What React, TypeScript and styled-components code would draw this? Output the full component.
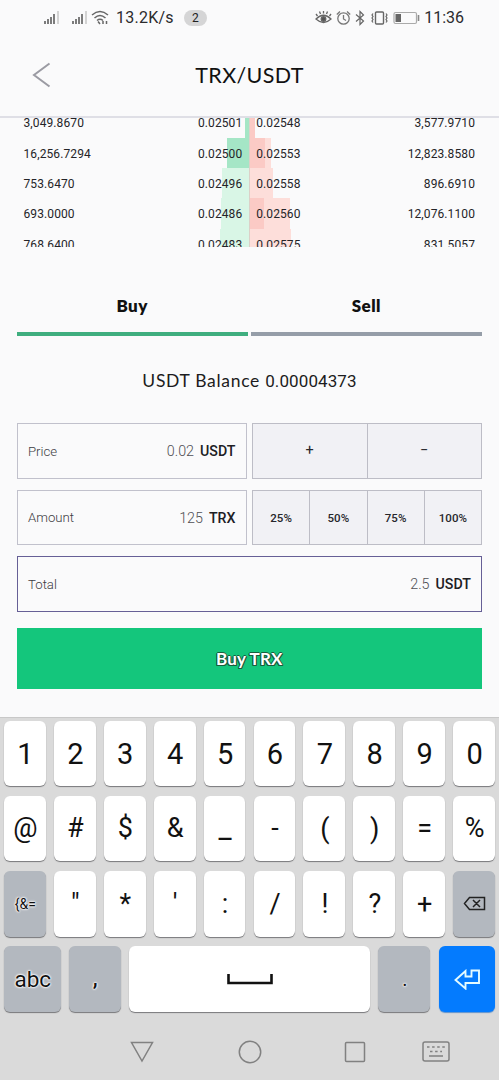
import React from 'react';
import styled, { createGlobalStyle } from 'styled-components';

const GlobalStyle = createGlobalStyle`
  * { box-sizing: border-box; }
  body { margin: 0; background: #fafafb; font-family: Roboto, "Liberation Sans", sans-serif; color: #151519; }
`;

const Screen = styled.main`
  width: 499px; height: 1080px; overflow: hidden;
  display: flex; flex-direction: column; background: #fafafb;
`;

const StatusBar = styled.header`
  height: 34px; padding: 0 35px 0 42px; flex: none;
  display: flex; justify-content: space-between; align-items: center;
`;
const StatusGroup = styled.div<{ $gap?: number }>`
  display: flex; align-items: center; height: 34px; gap: ${p => p.$gap ?? 0}px; padding-top: 1px;
`;
const StatusText = styled.span<{ $ml: number; $ls?: number }>`
  font-size: 16px; line-height: 34px; color: #2b2b2d; white-space: nowrap;
  margin-left: ${p => p.$ml}px; letter-spacing: ${p => p.$ls ?? 0}px;
`;
const CountPill = styled.span`
  width: 23px; height: 16px; border-radius: 8px; margin-left: 10px; background: #d5d5d6;
  font-size: 12px; line-height: 16px; text-align: center; color: #222;
`;

const TitleBar = styled.div`
  height: 84px; flex: none; display: grid; grid-template-columns: 60px 1fr 60px; align-items: center;
  border-bottom: 2px solid #dfdfe6;
`;
const BackButton = styled.button`
  border: 0; background: none; padding: 0 0 0 31px; display: flex;
`;
const Title = styled.h1`
  margin: 0; text-align: center; font: 400 21.5px/30px Lato, sans-serif; color: #111; letter-spacing: 0.35px;
`;

const OrderBook = styled.section`
  height: 129px; flex: none; overflow: hidden;
`;
const BookRow = styled.div`
  height: 30.4px; display: grid; grid-template-columns: 249px 250px; font-size: 12px; line-height: 32px;
  color: #242428; letter-spacing: 0.1px;
  &:first-child { margin-top: -10.7px; }
`;
const Side = styled.div<{ $sell?: boolean; $depth: number; $own: number }>`
  display: flex; justify-content: space-between; height: 30.4px;
  padding: ${p => (p.$sell ? '0 24px 0 6.2px' : '0 6.7px 0 23.5px')};
  background-repeat: no-repeat;
  background-position: ${p => (p.$sell ? 'left' : 'right')} top;
  background-image:
    ${p => (p.$sell ? 'linear-gradient(#fbcac5,#fbcac5)' : 'linear-gradient(#a5e6c6,#a5e6c6)')},
    ${p => (p.$sell ? 'linear-gradient(#fddeda,#fddeda)' : 'linear-gradient(#d9f6e6,#d9f6e6)')};
  background-size: ${p => p.$own}px 100%, ${p => p.$depth}px 100%;
  ${p => (p.$sell ? 'border-left: 1.4px solid #dcd0c8;' : '')}
`;

const Tabs = styled.nav`
  height: 53px; margin: 36px 17px 0 16.5px; flex: none; display: grid; grid-template-columns: 1fr 1fr; gap: 3px;
`;
const Tab = styled.button<{ $active?: boolean }>`
  border: 0; border-bottom: 4.5px solid ${p => (p.$active ? '#3fae7f' : '#959da8')}; background: none;
  font: 800 17px/20px Lato, sans-serif; color: #111; padding: 0 0 4px; letter-spacing: 0.45px;
`;

const Balance = styled.p`
  margin: 33px 0 0; height: 24px; text-align: center; font: 400 17.5px/24px Lato, sans-serif; color: #1c1c20;
  flex: none; letter-spacing: 0.7px;
  span { font: 400 17px/24px Roboto, sans-serif; letter-spacing: 0.1px; }
`;

const Form = styled.form`
  margin: 30px 17px 0 16.5px; flex: none; display: grid; grid-template-columns: 230px 230px; 
  justify-content: space-between; row-gap: 11px;
`;
const Field = styled.label<{ $focused?: boolean }>`
  height: 55.5px; border: 1px solid ${p => (p.$focused ? '#665f96' : '#c1c1cc')}; padding: 1px 10px 0 10.5px;
  ${p => (p.$focused ? 'grid-column: 1 / -1;' : '')}
  display: flex; align-items: center; font-size: 14.3px; color: #4f4f54; font-weight: 300;
`;
const FieldName = styled.span`flex: 1; font-size: 13.2px; color: #3c3c42;`;
const Unit = styled.b`margin-left: 6px; font-weight: 500; font-size: 14.2px; color: #202024;`;
const Segments = styled.div`
  height: 55.5px; display: flex; border: 1px solid #bdbdc6; background: #f1f1f5;
`;
const Segment = styled.button<{ $sign?: boolean }>`
  flex: 1; border: 0; background: none; padding: ${p => (p.$sign ? 0 : 2)}px 0 0;
  font: ${p => (p.$sign ? '400 14.5px' : '500 11.5px')} Roboto, sans-serif;
  color: #27272c; letter-spacing: 0.1px;
  & + & { border-left: 1px solid #bdbdc6; }
`;
const Submit = styled.button`
  height: 61px; margin: 16px 17px 0 16.5px; flex: none; border: 0; background: #14c67c; color: #fff;
  font: 700 17px/20px Lato, sans-serif; letter-spacing: 0.2px; padding: 1px 0 0;
  text-shadow: 1px 0 #195c3d, -1px 0 #195c3d, 0 1px #195c3d, 0 -1px #195c3d, 1px 1px #195c3d, -1px 1px #195c3d;
`;

const Keyboard = styled.section`
  margin-top: 28px; height: 363px; flex: none; background: #dadada; border-top: 1px solid #c8c8c8;
  padding: 3px 4px 0; display: flex; flex-direction: column;
`;
const KeyRow = styled.div<{ $columns?: string }>`
  display: grid; gap: 8.1px; height: 65.5px; margin-bottom: 9.8px; flex: none;
  grid-template-columns: ${p => p.$columns ?? 'repeat(10, 1fr)'};
`;
const Key = styled.button<{ $tone?: 'grey' | 'blue'; $size?: number; $dy?: number; $weight?: number }>`
  border: 0; min-width: 0; border-radius: 6px; display: flex; align-items: center; justify-content: center;
  background: ${p => (p.$tone === 'grey' ? '#b3b8bf' : p.$tone === 'blue' ? '#047bfe' : '#fff')};
  box-shadow: 0 1px 1px ${p => (p.$tone === 'blue' ? '#5d92cf' : '#77777a')};
  font: ${p => p.$weight ?? 400} ${p => p.$size ?? 29}px/34px Roboto, sans-serif; color: #111;
  padding: ${p => Math.max(0, p.$dy ?? 0) * 2}px 0 ${p => Math.max(0, -(p.$dy ?? 0)) * 2}px 1px;
  ${p => (p.$tone === 'grey' ? 'text-shadow: 0 0 1px #fff, 0 0 2px #fff, 0 0 2px #fff, 0 0 3px #fff;' : '')}
`;

const NavBar = styled.nav`
  height: 60px; display: flex; align-items: center; padding: 2px 0 0 126px;
  svg { flex: none; }
`;
const Spacer = styled.span<{ $w: number }>`width: ${p => p.$w}px; flex: none;`;

const SignalIcon = () => (
  <svg width="18" height="16" viewBox="0 0 18 16" stroke="#666" strokeWidth="1.7">
    <path d="M3 14v-3M6 14V9M9 14V7M12 14V4" /><path d="M16 14V1" stroke="#ccc" />
  </svg>
);
const WifiIcon = () => (
  <svg width="18" height="16" viewBox="0 0 18 16" fill="none" stroke="#666" strokeWidth="1.5">
    <path d="M1 5Q9-2 17 5M3.5 8Q9 3 14.500 8M6 10.500Q9 8 12 10.500" />
    <path d="M7 11.500l2 2.500M12 11v3M15.500 11v3" />
  </svg>
);
const EyeIcon = () => (
  <svg width="17" height="16" viewBox="0 0 17 16" fill="none" stroke="#666" strokeWidth="1.3">
    <path d="M1 9Q8.500 1.500 16 9Q8.500 16 1 9zM2.500 6L1 4M5.500 4L4.500 1.500M8.500 3.500V1M11.500 4l1-2.500M14.500 6L16 4" />
    <circle cx="8.500" cy="9" r="2.300" fill="#555" />
  </svg>
);
const AlarmIcon = () => (
  <svg width="15" height="16" viewBox="0 0 15 16" fill="none" stroke="#777" strokeWidth="1.3">
    <circle cx="7.500" cy="8.500" r="5.700" /><path d="M7.500 5v4l2.500 1.500M.8 4.500L4 1.500M14.200 4.500L11 1.500" />
  </svg>
);
const BluetoothIcon = () => (
  <svg width="10" height="16" viewBox="0 0 10 16" fill="none" stroke="#666" strokeWidth="1.2">
    <path d="M1 4.500l7.500 6.500L5 14.500v-13L8.500 5 1 11.500" />
  </svg>
);
const VibrateIcon = () => (
  <svg width="19" height="16" viewBox="0 0 19 16" fill="none" stroke="#666" strokeWidth="1.4">
    <rect x="5.500" y="2" width="8" height="12" rx="1" />
    <path d="M3 3.500l-1 1.500 1 1.500-1 1.500 1 1.500-1 1.500 1 1.500M16 3.500l1 1.500-1 1.500 1 1.500-1 1.500 1 1.500-1 1.500" strokeWidth="1.2" />
  </svg>
);
const BatteryIcon = () => (
  <svg width="27" height="14" viewBox="0 0 27 14" fill="none" stroke="#aaa" strokeWidth="1.2">
    <rect x="1" y="1.500" width="22.500" height="11" rx="1.500" /><rect x="2.500" y="3" width="5.500" height="8" fill="#666" stroke="none" />
    <path d="M25.500 4v6" stroke="#888" strokeWidth="1.600" />
  </svg>
);

const bids = [
  ['3,049.8670', '0.02501', 4, 4], ['16,256.7294', '0.02500', 22, 22], ['753.6470', '0.02496', 27, 0],
  ['693.0000', '0.02486', 28, 0], ['768.6400', '0.02483', 29, 0],
] as const;
const asks = [
  ['0.02548', '3,577.9710', 5, 5], ['0.02553', '12,823.8580', 21, 15], ['0.02558', '896.6910', 23, 0],
  ['0.02560', '12,076.1100', 40, 14], ['0.02575', '831.5057', 41, 0],
] as const;

const digits = '1234567890'.split('');
const symbols: { c: string; s?: number; dy?: number }[] = [
  { c: '@' }, { c: '#' }, { c: '$' }, { c: '&' }, { c: '_', s: 29 },
  { c: '-' }, { c: '(', dy: 0 }, { c: ')', dy: 0 }, { c: '=' }, { c: '%' },
];
const marks = ['"', '*', "'", ':', '/', '!', '?', '+'];

export default function App() {
  return (
    <Screen>
      <GlobalStyle />
      <StatusBar>
        <StatusGroup>
          <SignalIcon />
          <Spacer $w={10} />
          <SignalIcon />
          <Spacer $w={3} />
          <WifiIcon />
          <StatusText $ml={7} $ls={0.25}>13.2K/s</StatusText>
          <CountPill>2</CountPill>
        </StatusGroup>
        <StatusGroup $gap={4.3}>
          <EyeIcon /><AlarmIcon /><BluetoothIcon /><VibrateIcon /><BatteryIcon />
          <StatusText $ml={0}>11:36</StatusText>
        </StatusGroup>
      </StatusBar>
      <TitleBar>
        <BackButton aria-label="Back">
          <svg width="21" height="26" viewBox="0 0 21 26" fill="none" stroke="#9b9ba3" strokeWidth="2">
            <path d="M18.500 1.500L3 13l15.500 11.500" />
          </svg>
        </BackButton>
        <Title>TRX/USDT</Title>
      </TitleBar>
      <OrderBook>
        {bids.map((bid, i) => (
          <BookRow key={bid[1]}>
            <Side $depth={bid[2]} $own={bid[3]}><span>{bid[0]}</span><span>{bid[1]}</span></Side>
            <Side $sell $depth={asks[i][2]} $own={asks[i][3]}><span>{asks[i][0]}</span><span>{asks[i][1]}</span></Side>
          </BookRow>
        ))}
      </OrderBook>
      <Tabs><Tab $active>Buy</Tab><Tab>Sell</Tab></Tabs>
      <Balance>USDT Balance <span>0.00004373</span></Balance>
      <Form>
        <Field><FieldName>Price</FieldName>0.02<Unit>USDT</Unit></Field>
        <Segments><Segment type="button" $sign>+</Segment><Segment type="button" $sign>−</Segment></Segments>
        <Field><FieldName>Amount</FieldName>125<Unit>TRX</Unit></Field>
        <Segments>{['25%', '50%', '75%', '100%'].map(p => <Segment type="button" key={p}>{p}</Segment>)}</Segments>
        <Field $focused><FieldName>Total</FieldName>2.5<Unit>USDT</Unit></Field>
      </Form>
      <Submit>Buy TRX</Submit>
      <Keyboard>
        <KeyRow>{digits.map(d => <Key key={d} $dy={1}>{d}</Key>)}</KeyRow>
        <KeyRow>{symbols.map(k => <Key key={k.c} $size={k.s ?? 27} $dy={k.dy ?? -1}>{k.c}</Key>)}</KeyRow>
        <KeyRow>
          <Key $tone="grey" $size={14}>{'{&='}</Key>
          {marks.map(m => <Key key={m} $size={27}>{m}</Key>)}
          <Key $tone="grey" aria-label="Delete">
            <svg width="23" height="15" viewBox="0 0 23 15" fill="none" stroke="#222" strokeWidth="1.5">
              <path d="M6.500 1.500H21.500v12H6.500L1.500 7.500zM10 4l7 7M17 4l-7 7" />
            </svg>
          </Key>
        </KeyRow>
        <KeyRow $columns="56.5px 52px 1fr 52px 56.5px">
          <Key $tone="grey" $size={22.5}>abc</Key>
          <Key $tone="grey" $size={22} $weight={500}>,</Key>
          <Key aria-label="Space">
            <svg width="46" height="11" viewBox="0 0 46 11" fill="none" stroke="#111" strokeWidth="2.600">
              <path d="M1.500 0v9h43V0" />
            </svg>
          </Key>
          <Key $tone="grey" $size={20}>.</Key>
          <Key $tone="blue" aria-label="Enter">
            <svg width="27" height="21" viewBox="0 0 27 21" fill="none" stroke="#e4fbff" strokeWidth="1.900">
              <path d="M1.500 11L11.500 2v5.500h6V1.500h7.500V14H11.500v5.500z" />
            </svg>
          </Key>
        </KeyRow>
        <NavBar>
          <svg width="24" height="22" viewBox="0 0 24 22" fill="none" stroke="#818181" strokeWidth="1.500"><path d="M1.500 1.500h21L12 20z" /></svg>
          <Spacer $w={83.5} />
          <svg width="24" height="24" viewBox="0 0 24 24" fill="none" stroke="#818181" strokeWidth="1.500"><circle cx="12" cy="12" r="10.700" /></svg>
          <Spacer $w={82.5} />
          <svg width="22" height="22" viewBox="0 0 22 22" fill="none" stroke="#818181" strokeWidth="1.500"><rect x="1.500" y="1.500" width="19" height="19" rx="1" /></svg>
          <Spacer $w={56} />
          <svg width="28" height="21" viewBox="0 0 28 21" fill="none" stroke="#818181" strokeWidth="1.500">
            <rect x="1" y="1" width="26" height="19" rx="2" />
            <path d="M5 6h18M8 10.500h12" strokeDasharray="2.500 2.600" /><path d="M7 15h14" />
          </svg>
        </NavBar>
      </Keyboard>
    </Screen>
  );
}
